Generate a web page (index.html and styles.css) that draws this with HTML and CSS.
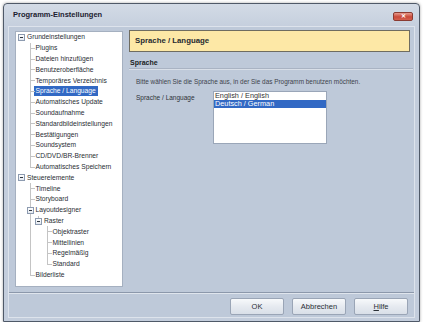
FILE: index.html
```html
<!DOCTYPE html>
<html lang="de">
<head>
    <meta charset="UTF-8">
    <title>Programm-Einstellungen</title>
    <link rel="stylesheet" href="styles.css">
</head>
<body>
    <div class="window">
        <div class="titlebar">
            <span class="title">Programm-Einstellungen</span>
            <span class="close">&#x2715;</span>
        </div>
        <div class="client">
            <div class="main">
                <div class="tree-panel">
                    <ul class="tree">
                        <li><div class="row"><span class="joint toggle"></span><span class="label">Grundeinstellungen</span></div>
                            <ul>
                                <li><div class="row"><span class="joint"></span><span class="label">Plugins</span></div></li>
                                <li><div class="row"><span class="joint"></span><span class="label">Dateien hinzufügen</span></div></li>
                                <li><div class="row"><span class="joint"></span><span class="label">Benutzeroberfläche</span></div></li>
                                <li><div class="row"><span class="joint"></span><span class="label">Temporäres Verzeichnis</span></div></li>
                                <li><div class="row"><span class="joint"></span><span class="label selected">Sprache / Language</span></div></li>
                                <li><div class="row"><span class="joint"></span><span class="label">Automatisches Update</span></div></li>
                                <li><div class="row"><span class="joint"></span><span class="label">Soundaufnahme</span></div></li>
                                <li><div class="row"><span class="joint"></span><span class="label">Standardbildeinstellungen</span></div></li>
                                <li><div class="row"><span class="joint"></span><span class="label">Bestätigungen</span></div></li>
                                <li><div class="row"><span class="joint"></span><span class="label">Soundsystem</span></div></li>
                                <li><div class="row"><span class="joint"></span><span class="label">CD/DVD/BR-Brenner</span></div></li>
                                <li><div class="row"><span class="joint"></span><span class="label">Automatisches Speichern</span></div></li>
                            </ul>
                        </li>
                        <li><div class="row"><span class="joint toggle"></span><span class="label">Steuerelemente</span></div>
                            <ul>
                                <li><div class="row"><span class="joint"></span><span class="label">Timeline</span></div></li>
                                <li><div class="row"><span class="joint"></span><span class="label">Storyboard</span></div></li>
                                <li><div class="row"><span class="joint toggle"></span><span class="label">Layoutdesigner</span></div>
                                    <ul>
                                        <li><div class="row"><span class="joint toggle"></span><span class="label">Raster</span></div>
                                            <ul>
                                                <li><div class="row"><span class="joint"></span><span class="label">Objektraster</span></div></li>
                                                <li><div class="row"><span class="joint"></span><span class="label">Mittellinien</span></div></li>
                                                <li><div class="row"><span class="joint"></span><span class="label">Regelmäßig</span></div></li>
                                                <li><div class="row"><span class="joint"></span><span class="label">Standard</span></div></li>
                                            </ul>
                                        </li>
                                    </ul>
                                </li>
                                <li><div class="row"><span class="joint"></span><span class="label">Bilderliste</span></div></li>
                            </ul>
                        </li>
                    </ul>
                </div>

                <div class="page">
                    <div class="page-header">Sprache / Language</div>
                    <div class="section-title">Sprache</div>
                    <p class="hint">Bitte wählen Sie die Sprache aus, in der Sie das Programm benutzen möchten.</p>
                    <div class="field">
                        <label class="field-label">Sprache / Language</label>
                        <div class="listbox">
                            <div class="option">English / English</div>
                            <div class="option selected">Deutsch / German</div>
                        </div>
                    </div>
                </div>
            </div>

            <div class="buttons">
                <button>OK</button>
                <button>Abbrechen</button>
                <button><u>H</u>ilfe</button>
            </div>
        </div>
    </div>
</body>
</html>
```

FILE: styles.css
```css
body { margin: 0; background-color: #ffffff; font-family: "Liberation Sans", Arial, sans-serif; font-size: 7px; color: #1f2329; }
.window { margin: 3px 0 0 3px; width: 415px; height: 317px; border: 1px solid #4f5968; border-radius: 4px 4px 0 0; background: linear-gradient(#d3dbe6, #c3cddc 26px, #c3cddc); box-shadow: 0 0 3px rgba(0, 0, 0, 0.35); display: flex; flex-direction: column; }
.titlebar { height: 22px; display: flex; align-items: flex-start; justify-content: space-between; padding: 0 6px 0 9px; }
.title { font-size: 7.5px; line-height: 22px; color: #1b2030; font-weight: 600; }
.close { margin-top: 8px; width: 20px; height: 9px; border: 1px solid #8a3b32; border-radius: 2px; box-sizing: border-box; background: linear-gradient(#e79a8c, #c9493a 55%, #d4604e); color: #ffffff; font-size: 6px; line-height: 7px; text-align: center; font-weight: bold; }
.client { margin: 0 4px 3px 4px; flex: 1; border: 1px solid #dde3ec; background-color: #bec9d9; display: flex; flex-direction: column; }
.main { flex: 1; display: flex; gap: 6px; padding: 4px 1px 5px 6px; border-bottom: 1px solid #8c98ab; }
.tree-panel { width: 106px; background-color: #ffffff; border: 1px solid #a5b0c0; }
.tree, .tree ul { list-style: none; margin: 0; padding: 0; }
.tree ul { padding-left: 8.5px; }
.tree { padding-left: 1px; }
.tree li { position: relative; }
.tree ul > li::before { content: ""; position: absolute; left: 4px; top: 0; bottom: 0; border-left: 1px solid #c4c4c4; }
.tree ul > li:last-child::before { bottom: auto; height: 5.5px; }
.row { height: 10.8px; display: flex; align-items: center; position: relative; }
.joint { width: 9px; height: 100%; flex: none; position: relative; }
.joint::after { content: ""; position: absolute; left: 4px; top: 5px; width: 5px; border-top: 1px solid #c4c4c4; }
.joint.toggle::after { left: 1px; top: 2px; width: 5px; height: 5px; border: 1px solid #8d9bb0; background: linear-gradient(#ffffff, #e3e8ef); }
.joint.toggle::before { content: ""; position: absolute; left: 3px; top: 5px; width: 3px; border-top: 1px solid #2f3640; z-index: 1; }
.label { padding: 0 1px; font-size: 6.7px; line-height: 10px; white-space: nowrap; color: #2a2e34; }
.label.selected { background-color: #3269c4; color: #ffffff; padding: 0 2px; margin-left: -1px; }
.page { flex: 1; margin-top: -1px; }
.page-header { height: 20px; margin-right: 3px; border: 1px solid #6f6c60; background-color: #fde8a6; font-size: 7.8px; font-weight: bold; line-height: 20px; padding-left: 5px; color: #262a30; }
.section-title { margin-top: 6px; padding-left: 1px; font-weight: bold; font-size: 7px; line-height: 10px; border-bottom: 1px solid #a9b3c3; box-shadow: 0 1px 0 #d9dfe8; color: #1a1e24; }
.hint { margin: 8px 0 0 7px; font-size: 6.4px; line-height: 10px; color: #3d434b; }
.field { display: flex; margin: 6px 0 0 7px; }
.field-label { width: 77px; padding-top: 1px; font-size: 6.5px; line-height: 8px; color: #2d3238; }
.listbox { width: 112px; height: 51px; background-color: #ffffff; border: 1px solid #9aa6b8; margin-top: -2px; }
.option { font-size: 7.3px; line-height: 8px; padding-left: 1px; color: #333; }
.option.selected { background-color: #3269c4; color: #ffffff; }
.buttons { height: 24px; display: flex; justify-content: flex-end; align-items: flex-start; gap: 8px; padding: 4px 6px 0 0; box-sizing: border-box; border-top: 1px solid #dfe5ed; }
button { width: 54px; height: 17px; border: 1px solid #9aa5b6; border-radius: 2px; background: linear-gradient(#f7f9fb, #e6eaf0 50%, #d9dfe8); font-family: "Liberation Sans", Arial, sans-serif; font-size: 7.5px; color: #2a2f36; padding: 0; }
```
